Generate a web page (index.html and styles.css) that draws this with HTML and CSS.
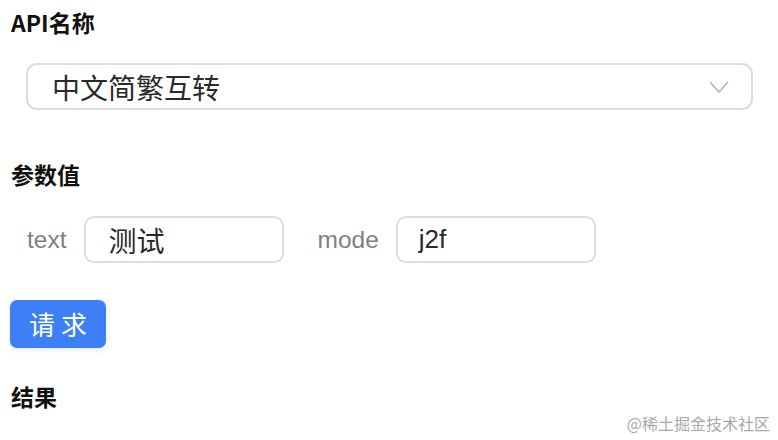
FILE: index.html
```html
<!DOCTYPE html>
<html lang="zh-CN">
<head>
<meta charset="utf-8">
<link rel="stylesheet" href="styles.css">
</head>
<body>
<div class="page">
  <div class="title">API名称</div>
  <div class="select">
    <span class="select-value">中文简繁互转</span>
    <svg class="chevron" width="20" height="14" viewBox="0 0 20 14"><path d="M1 2 L10 12 L19 2" fill="none" stroke="#b5b5b5" stroke-width="1.6"/></svg>
  </div>
  <div class="title title-params">参数值</div>
  <div class="params">
    <label class="param-label">text</label>
    <div class="input">测试</div>
    <label class="param-label param-label-mode">mode</label>
    <div class="input input-mode">j2f</div>
  </div>
  <button class="btn">请 求</button>
  <div class="title title-result">结果</div>
</div>
<div class="watermark">@稀土掘金技术社区</div>
</body>
</html>
```
FILE: styles.css
```css
html, body {
  margin: 0;
  padding: 0;
  background: #ffffff;
}
body {
  width: 778px;
  height: 440px;
  position: relative;
  overflow: hidden;
  font-family: "Liberation Sans", "Noto Sans CJK SC", sans-serif;
}
.page {
  padding: 7px 0 0 11px;
  display: flex;
  flex-direction: column;
  align-items: flex-start;
}
.title {
  font-family: "Noto Sans CJK SC", sans-serif;
  font-size: 23px;
  font-weight: 700;
  line-height: 30px;
  color: #111;
}
.select {
  margin-top: 26px;
  margin-left: 15px;
  width: 727px;
  height: 47px;
  box-sizing: border-box;
  border: 2px solid #dcdcdc;
  border-radius: 11px;
  display: flex;
  align-items: center;
  justify-content: space-between;
  padding: 0 22px 0 24px;
}
.select-value {
  font-family: "Noto Sans CJK SC", sans-serif;
  font-size: 28px;
  color: #2a2a2a;
  line-height: 1;
}
.title-params {
  margin-top: 49px;
}
.params {
  margin-top: 27px;
  margin-left: 16px;
  display: flex;
  align-items: center;
}
.param-label {
  font-size: 24.5px;
  color: #7f7f7f;
  margin-right: 17px;
}
.param-label-mode {
  margin-left: 34px;
}
.input {
  width: 200px;
  height: 47px;
  box-sizing: border-box;
  border: 2px solid #dcdcdc;
  border-radius: 10px;
  display: flex;
  align-items: center;
  padding-left: 23px;
  font-family: "Noto Sans CJK SC", sans-serif;
  font-size: 28px;
  color: #2a2a2a;
}
.input-mode {
  font-family: "Liberation Sans", "Noto Sans CJK SC", sans-serif;
  font-size: 26px;
  padding-left: 21px;
}
.btn {
  margin-top: 37px;
  margin-left: -1px;
  width: 96px;
  height: 48px;
  border: none;
  border-radius: 7px;
  background: #3e7ff6;
  color: #fff;
  font-family: "Noto Sans CJK SC", sans-serif;
  font-size: 26px;
  line-height: 1;
  padding: 0;
  box-shadow: 0 3px 4px rgba(62, 127, 246, 0.12);
}
.title-result {
  margin-top: 33px;
}
.watermark {
  position: absolute;
  right: 8px;
  bottom: 5px;
  font-family: "Noto Sans CJK SC", sans-serif;
  font-size: 16px;
  color: #a8a8a8;
  letter-spacing: 0;
}
```
